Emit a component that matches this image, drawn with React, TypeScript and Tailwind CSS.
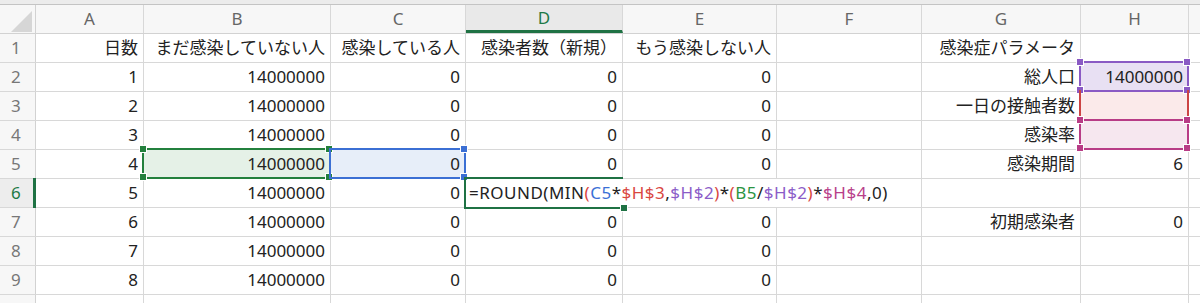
import React from "react";

const colWidths = ["w-[108px]", "w-[187px]", "w-[135px]", "w-[157px]", "w-[154px]", "w-[145px]", "w-[159px]", "w-[108px]"];
const letters = ["A", "B", "C", "D", "E", "F", "G", "H"];

const rows: string[][] = [
    ["日数", "まだ感染していない人", "感染している人", "感染者数（新規）", "もう感染しない人", "", "感染症パラメータ", ""],
    ["1", "14000000", "0", "0", "0", "", "総人口", "14000000"],
    ["2", "14000000", "0", "0", "0", "", "一日の接触者数", ""],
    ["3", "14000000", "0", "0", "0", "", "感染率", ""],
    ["4", "14000000", "0", "0", "0", "", "感染期間", "6"],
    ["5", "14000000", "0", "", "", "", "", ""],
    ["6", "14000000", "0", "0", "0", "", "初期感染者", "0"],
    ["7", "14000000", "0", "0", "0", "", "", ""],
    ["8", "14000000", "0", "0", "0", "", "", ""],
    ["9", "14000000", "0", "0", "0", "", "", ""],
];

type Corner = "tl" | "tr" | "bl" | "br";

type Ref = {
    bg: string;
    box: string;
    handle: string;
    corners: Corner[];
};

// formula reference highlights, keyed by "col-row"
const refs: Record<string, Ref> = {
    "1-4": { bg: "bg-[#e5f1e7]", box: "border-2 border-[#23803d]", handle: "bg-[#23803d]", corners: ["tl", "tr", "bl", "br"] },
    "2-4": { bg: "bg-[#e7eef9]", box: "border-2 border-[#3b6fd4]", handle: "bg-[#3b6fd4]", corners: ["tr", "br"] },
    "7-1": { bg: "bg-[#e8e0f3]", box: "border-2 border-[#8a5ac4]", handle: "bg-[#8a5ac4]", corners: ["tl", "tr", "bl", "br"] },
    "7-2": { bg: "bg-[#fbeaea]", box: "border-x-2 border-[#cc4444]", handle: "bg-[#cc4444]", corners: [] },
    "7-3": { bg: "bg-[#f6e7ef]", box: "border-2 border-[#b83c86]", handle: "bg-[#b83c86]", corners: ["tl", "tr", "bl", "br"] },
};

const cornerPos: Record<Corner, string> = {
    tl: "-left-[5px] -top-[5px]",
    tr: "-right-[4px] -top-[5px]",
    bl: "-left-[5px] -bottom-[4px]",
    br: "-right-[4px] -bottom-[4px]",
};

function Formula() {
    const black = "text-[#222]";
    const parts: [string, string][] = [
        ["=ROUND(MIN", black],
        ["(", "text-[#d9473f]"],
        ["C5", "text-[#3b70d6]"],
        ["*", black],
        ["$H$3", "text-[#d9473f]"],
        [",", black],
        ["$H$2", "text-[#8b5cc8]"],
        [")", "text-[#d9473f]"],
        ["*", black],
        ["(", "text-[#d9473f]"],
        ["B5", "text-[#2b9442]"],
        ["/", black],
        ["$H$2", "text-[#8b5cc8]"],
        [")", "text-[#d9473f]"],
        ["*", black],
        ["$H$4", "text-[#b8408a]"],
        [",0)", black],
    ];
    return (
        <span className="absolute left-[3px] top-0 h-full flex items-center whitespace-nowrap tracking-[0.5px] z-20">
            {parts.map(([t, c], i) => (
                <span key={i} className={c}>{t}</span>
            ))}
        </span>
    );
}

export default function App() {
    return (
        <div className="w-[1200px] h-[303px] overflow-hidden bg-white text-[17px] text-[#222] select-none" style={{ fontFamily: '"Noto Sans", "Noto Sans CJK JP", sans-serif' }}>
            <div className="h-[5px] bg-[#ececec] border-b border-[#c4c4c4]" />

            {/* column headers */}
            <div className="flex h-[29px] bg-[#f7f7f7] border-b border-[#d2d2d2]">
                <div className="w-[36px] shrink-0 border-r border-[#d2d2d2] relative">
                    <svg className="absolute left-0 top-0" width="35" height="28" viewBox="0 0 35 28">
                        <polygon points="32,6 32,27 11,27" fill="#d6d6d6" />
                    </svg>
                </div>
                {letters.map((l, i) => (
                    <div
                        key={l}
                        className={`${colWidths[i]} shrink-0 border-r border-[#d8d8d8] flex items-center justify-center ${l === "D" ? "bg-[#e9e9e9] text-[#1f7a47] border-b-[3px] border-b-[#1f7244]" : "text-[#666]"}`}
                    >
                        {l}
                    </div>
                ))}
                <div className="flex-1" />
            </div>

            {rows.map((row, r) => {
                const rowNo = r + 1;
                const active = rowNo === 6;
                return (
                    <div key={r} className="flex h-[29px] border-b border-[#d8d8d8]">
                        <div className={`w-[36px] shrink-0 border-r border-[#d2d2d2] flex items-center pl-[11px] relative ${active ? "bg-[#ededed] text-[#1f7a47]" : "bg-[#f7f7f7] text-[#777]"}`}>
                            {rowNo}
                            {active && <div className="absolute right-[-1px] -top-[1px] -bottom-[1px] w-[3px] bg-[#1f7244]" />}
                        </div>
                        {row.map((val, c) => {
                            const ref = refs[`${c}-${r}`];
                            const isFormula = r === 5 && c === 3;
                            const noRight = r === 5 && (c === 3 || c === 4);
                            return (
                                <div
                                    key={c}
                                    className={`${colWidths[c]} shrink-0 relative flex items-center justify-end pr-[5px] whitespace-nowrap ${noRight ? "" : "border-r border-[#d8d8d8]"} ${ref ? ref.bg : ""}`}
                                >
                                    {val}
                                    {ref && (
                                        <div className={`absolute -left-[2px] -top-[2px] -right-[1px] -bottom-[1px] ${ref.box} z-10`}>
                                            {ref.corners.map((k) => (
                                                <span key={k} className={`absolute size-[8px] border border-white ${ref.handle} ${cornerPos[k]}`} />
                                            ))}
                                        </div>
                                    )}
                                    {isFormula && (
                                        <>
                                            <div className="absolute -left-[2px] -top-[2px] right-0 -bottom-[2px] border-l-2 border-y-2 border-[#1f7244] z-10">
                                                <span className="absolute -right-[5px] -bottom-[5px] size-[8px] bg-[#1f7244] border border-white" />
                                            </div>
                                            <Formula />
                                        </>
                                    )}
                                </div>
                            );
                        })}
                        <div className="flex-1" />
                    </div>
                );
            })}
        </div>
    );
}
